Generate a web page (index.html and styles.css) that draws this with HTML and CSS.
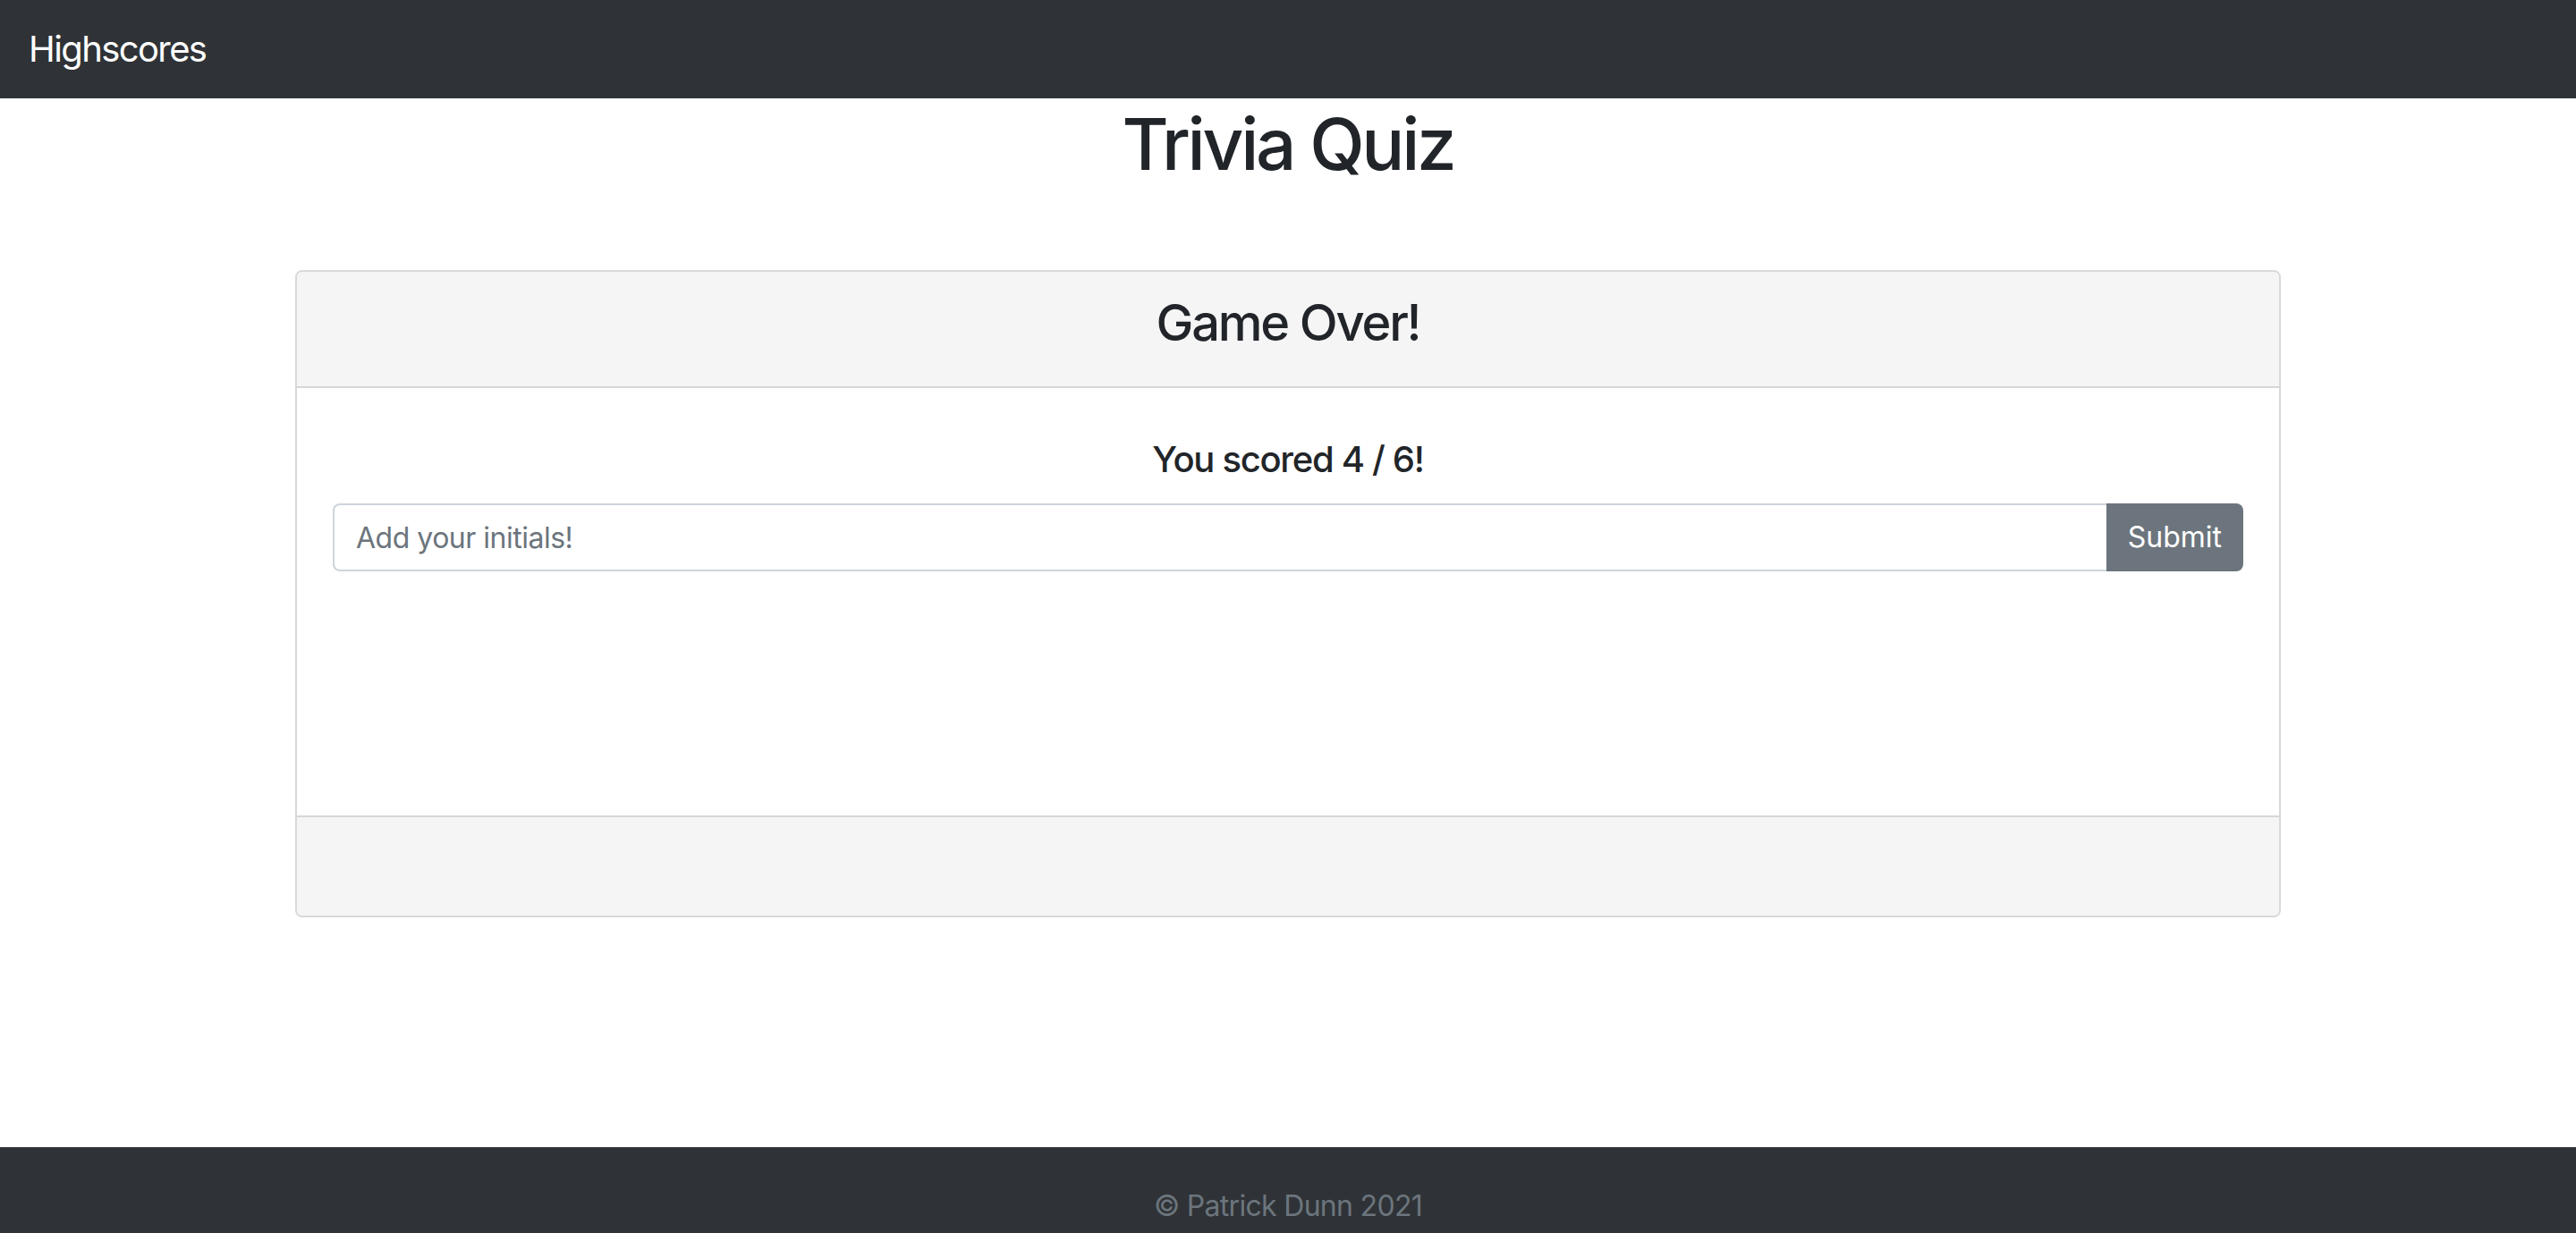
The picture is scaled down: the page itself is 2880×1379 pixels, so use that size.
FILE: index.html
```html
<!DOCTYPE html>
<html lang="en">
<head>
<meta charset="utf-8">
<title>Trivia Quiz</title>
<link rel="stylesheet" href="styles.css">
</head>
<body>
<nav class="navbar">
  <a class="brand" href="#">Highscores</a>
</nav>
<main class="main">
  <h1 class="title">Trivia Quiz</h1>
  <section class="card">
    <header class="card-header">
      <h3 class="card-title">Game Over!</h3>
    </header>
    <div class="card-body">
      <h5 class="score">You scored 4 / 6!</h5>
      <form class="input-group">
        <input class="form-control" type="text" placeholder="Add your initials!">
        <button class="btn" type="button">Submit</button>
      </form>
    </div>
    <div class="card-footer"></div>
  </section>
</main>
<footer class="footer">
  <p class="copy">© Patrick Dunn 2021</p>
</footer>
</body>
</html>
```

FILE: styles.css
```css
* { box-sizing: border-box; }
html, body { margin: 0; padding: 0; }
body {
  font-family: Inter, "Noto Sans", "Liberation Sans", sans-serif;
  color: #212529;
  background: #fff;
}
.navbar {
  background: #2f3337;
  height: 110px;
  padding: 0 32px;
  display: flex;
  align-items: center;
}
.brand {
  color: #fff;
  text-decoration: none;
  font-size: 40px;
  line-height: 60px;
  letter-spacing: -1.6px;
}
.main {
  display: flex;
  flex-direction: column;
  align-items: center;
}
.title {
  margin: 3px 0 0;
  font-size: 80px;
  font-weight: 500;
  line-height: 96px;
  letter-spacing: -3.3px;
}
.card {
  margin-top: 93px;
  width: 2220px;
  border: 2px solid #d9d9d9;
  border-radius: 8px;
  overflow: hidden;
}
.card-header {
  background: #f5f5f5;
  border-bottom: 2px solid #d6d6d6;
  height: 130px;
  padding: 24px 40px 0;
  text-align: center;
}
.card-title {
  margin: 0;
  font-size: 56px;
  font-weight: 500;
  line-height: 67px;
  letter-spacing: -2.2px;
}
.card-body {
  height: 478px;
  padding: 56px 40px 0;
}
.score {
  margin: 0;
  text-align: center;
  font-size: 40px;
  font-weight: 500;
  line-height: 48px;
  letter-spacing: -1.3px;
}
.input-group {
  margin: 25px 0 0;
  display: flex;
  height: 76px;
}
.form-control {
  flex: 1;
  min-width: 0;
  height: 76px;
  border: 2px solid #ced4da;
  border-right: none;
  border-radius: 8px 0 0 8px;
  padding: 0 24px;
  font-family: inherit;
  font-size: 32px;
  letter-spacing: -0.5px;
  color: #495057;
  outline: none;
}
.form-control::placeholder { color: #6c757d; }
.btn {
  height: 76px;
  padding: 0 24px;
  border: none;
  border-radius: 0 8px 8px 0;
  background: #6c757d;
  color: #fff;
  font-family: inherit;
  font-size: 32px;
  line-height: 48px;
}
.card-footer {
  background: #f5f5f5;
  border-top: 2px solid #d6d6d6;
  height: 112px;
}
.footer {
  margin-top: 257px;
  background: #2f3337;
  padding: 42px 0 45px;
  text-align: center;
}
.copy {
  margin: 0;
  font-size: 32px;
  line-height: 48px;
  letter-spacing: -0.7px;
  color: #6c757d;
}
```
